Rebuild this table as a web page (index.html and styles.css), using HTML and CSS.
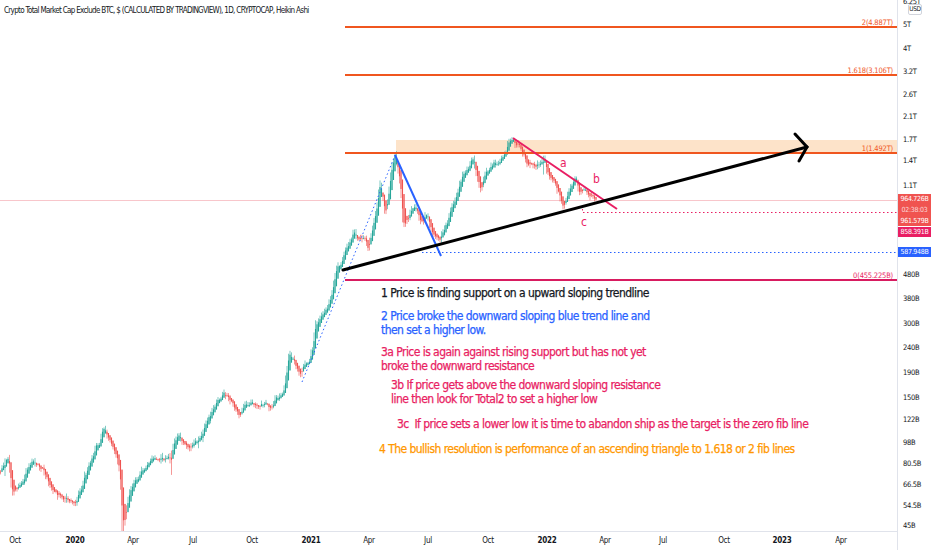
FILE: index.html
```html
<!DOCTYPE html>
<html lang="en">
<head>
<meta charset="utf-8">
<title>Crypto Total Market Cap Exclude BTC</title>
<link rel="stylesheet" href="styles.css">
</head>
<body>
<div class="app">
  <div class="chart">
    <svg class="plot" width="897" height="531" viewBox="0 0 897 531">
      <rect class="band" x="396" y="140" width="501" height="13"/>
      <line class="last-line" x1="0" y1="200.5" x2="897" y2="200.5"/>
      <g id="candles"></g>
      <line class="fib fib-hi" x1="345" y1="27" x2="897" y2="27"/>
      <line class="fib fib-hi" x1="345" y1="75" x2="897" y2="75"/>
      <line class="fib fib-hi" x1="345" y1="153" x2="897" y2="153"/>
      <line class="fib fib-zero" x1="345" y1="280" x2="897" y2="280"/>
      <text class="fib-label" x="893" y="25">2(4.887T)</text>
      <text class="fib-label" x="893" y="73">1.618(3.106T)</text>
      <text class="fib-label" x="893" y="151">1(1.492T)</text>
      <text class="fib-label zero" x="893" y="278">0(455.225B)</text>
      <line class="dot-blue" x1="302" y1="382" x2="396" y2="153"/>
      <line class="dot-blue" x1="422" y1="252.5" x2="897" y2="252.5"/>
      <line class="dot-red" x1="583" y1="212.5" x2="897" y2="212.5"/>
      <line class="dot-red" x1="582.5" y1="205" x2="582.5" y2="212"/>
      <line class="trend-blue" x1="395" y1="155" x2="441" y2="256"/>
      <line class="trend-red" x1="513" y1="138" x2="617" y2="209"/>
      <line class="trend-black" x1="343" y1="270" x2="807" y2="147"/>
      <polyline class="trend-black" points="795,134 807,147 799,161"/>
      <text class="wave" x="560" y="167">a</text>
      <text class="wave" x="593" y="183">b</text>
      <text class="wave" x="581" y="226">c</text>
    </svg>
    <div class="title">Crypto Total Market Cap Exclude BTC, $ (CALCULATED BY TRADINGVIEW), 1D, CRYPTOCAP, Heikin Ashi</div>
    <div class="note n1">1 Price is finding support on a upward sloping trendline</div>
    <div class="note n2">2 Price broke the downward sloping blue trend line and<br>then set a higher low.</div>
    <div class="note n3a">3a Price is again against rising support but has not yet<br>broke the downward resistance</div>
    <div class="note n3b">3b If price gets above the downward sloping resistance<br>line then look for Total2 to set a higher low</div>
    <div class="note n3c">3c&nbsp; If price sets a lower low it is time to abandon ship as the target is the zero fib line</div>
    <div class="note n4">4 The bullish resolution is performance of an ascending triangle to 1.618 or 2 fib lines</div>
  </div>
  <div class="price-axis">
    <span class="tick" style="top:1px">6.25T</span>
    <span class="unit">USD</span>
    <span class="tick" style="top:24px">5T</span>
    <span class="tick" style="top:48px">4T</span>
    <span class="tick" style="top:71px">3.2T</span>
    <span class="tick" style="top:94px">2.6T</span>
    <span class="tick" style="top:116px">2.1T</span>
    <span class="tick" style="top:139px">1.7T</span>
    <span class="tick" style="top:160px">1.4T</span>
    <span class="tick" style="top:185px">1.1T</span>
    <span class="tick" style="top:274px">480B</span>
    <span class="tick" style="top:298px">380B</span>
    <span class="tick" style="top:323px">300B</span>
    <span class="tick" style="top:347px">240B</span>
    <span class="tick" style="top:372px">190B</span>
    <span class="tick" style="top:397px">150B</span>
    <span class="tick" style="top:419px">122B</span>
    <span class="tick" style="top:442px">98B</span>
    <span class="tick" style="top:463px">80.5B</span>
    <span class="tick" style="top:484px">66.5B</span>
    <span class="tick" style="top:505px">54.5B</span>
    <span class="tick" style="top:525px">45B</span>
    <div class="tag tag-last" style="top:194px">
      <span>964.726B</span>
      <span class="timer">02:38:03</span>
      <span>961.579B</span>
    </div>
    <div class="tag tag-pink" style="top:227px"><span>858.391B</span></div>
    <div class="tag tag-blue" style="top:247px"><span>587.948B</span></div>
  </div>
  <div class="time-axis">
    <span class="date" style="left:15px">Oct</span>
    <span class="date year" style="left:75px">2020</span>
    <span class="date" style="left:133px">Apr</span>
    <span class="date" style="left:193px">Jul</span>
    <span class="date" style="left:252px">Oct</span>
    <span class="date year" style="left:311px">2021</span>
    <span class="date" style="left:369px">Apr</span>
    <span class="date" style="left:428px">Jul</span>
    <span class="date" style="left:488px">Oct</span>
    <span class="date year" style="left:547px">2022</span>
    <span class="date" style="left:605px">Apr</span>
    <span class="date" style="left:663px">Jul</span>
    <span class="date" style="left:724px">Oct</span>
    <span class="date year" style="left:782px">2023</span>
    <span class="date" style="left:841px">Apr</span>
  </div>
  <div class="corner"></div>
</div>
<script src="script.js"></script>
</body>
</html>
```

FILE: styles.css
```css
* { box-sizing: border-box; margin: 0; padding: 0; }
html, body { background: #ffffff; }
body {
  margin: 0;
  width: 932px;
  height: 550px;
  overflow: hidden;
  font-family: "DejaVu Sans Condensed", "Liberation Sans Narrow", "Liberation Sans", sans-serif;
  color: #131722;
}
.app {
  display: grid;
  grid-template-columns: 897px 35px;
  grid-template-rows: 531px 19px;
  width: 932px;
  height: 550px;
}
.chart { position: relative; overflow: hidden; }
.plot { display: block; }

.band { fill: #fde3c9; }
.last-line { stroke: #f8c6cb; stroke-width: 1; }
.fib { stroke-width: 2; }
.fib-hi { stroke: #f0561f; }
.fib-zero { stroke: #d81b60; }
.fib-label {
  font-size: 7.5px;
  letter-spacing: -0.2px;
  fill: #f0561f;
  text-anchor: end;
}
.fib-label.zero { fill: #e91e63; }
.dot-blue { stroke: #2962ff; stroke-width: 1; stroke-dasharray: 1.5 2.5; }
.dot-red { stroke: #e91e63; stroke-width: 1; stroke-dasharray: 1.5 2.5; }
.trend-blue { stroke: #2962ff; stroke-width: 2; }
.trend-red { stroke: #e91e63; stroke-width: 2; }
.trend-black { stroke: #000000; stroke-width: 3; fill: none; stroke-linecap: round; }
.wave { font-size: 12px; fill: #e91e63; }

.title {
  position: absolute;
  left: 4px;
  top: 5px;
  font-size: 8px;
  letter-spacing: -0.68px;
  line-height: 11px;
  white-space: nowrap;
  color: #131722;
}
.note {
  position: absolute;
  font-size: 12px;
  letter-spacing: -0.55px;
  line-height: 14px;
  white-space: nowrap;
  -webkit-text-stroke: 0.25px currentColor;
}
.n1 { left: 381px; top: 286px; color: #131722; }
.n2 { left: 381px; top: 309px; color: #2962ff; }
.n3a { left: 381px; top: 345px; color: #e91e63; }
.n3b { left: 391px; top: 378px; color: #e91e63; }
.n3c { left: 397px; top: 417px; color: #e91e63; }
.n4 { left: 379px; top: 442px; color: #ff9800; }

.price-axis {
  position: relative;
  border-left: 1px solid #e0e3eb;
  overflow: hidden;
  font-size: 7.5px;
  letter-spacing: -0.3px;
  color: #131722;
}
.tick {
  position: absolute;
  left: 5px;
  transform: translateY(-50%);
  line-height: 9px;
  white-space: nowrap;
}
.unit {
  position: absolute;
  left: 10px;
  top: 4px;
  width: 14px;
  height: 11px;
  border: 1px solid #d1d4dc;
  border-radius: 2px;
  font-size: 6.5px;
  line-height: 9px;
  text-align: center;
}
.tag {
  position: absolute;
  left: 0;
  width: 33px;
  display: flex;
  flex-direction: column;
  align-items: center;
  color: #ffffff;
  font-size: 7px;
  letter-spacing: -0.3px;
  line-height: 10px;
}
.tag-last { background: #f05350; height: 32px; justify-content: space-around; }
.tag-last .timer { color: rgba(255,255,255,0.75); }
.tag-pink { background: #e91e63; height: 10px; }
.tag-blue { background: #2962ff; height: 10px; }

.time-axis {
  position: relative;
  border-top: 1px solid #e0e3eb;
  font-size: 8px;
  letter-spacing: -0.3px;
}
.date {
  position: absolute;
  top: 50%;
  transform: translate(-50%, -50%);
  line-height: 10px;
  white-space: nowrap;
}
.date.year { font-weight: bold; }
.corner { border-left: 1px solid #e0e3eb; }
```

FILE: script.js
```js
(function () {
  var pts = [[0,473],[8,460],[12,490],[20,485],[33,463],[45,473],[52,490],[65,498],[75,505],[85,477],[103,427],[110,443],[116,453],[120,475],[122,515],[124,520],[127,505],[135,480],[150,460],[165,457],[170,460],[175,437],[185,443],[190,450],[200,437],[210,417],[222,393],[232,400],[237,413],[245,407],[255,408],[265,400],[272,407],[280,393],[285,385],[288,355],[295,365],[300,372],[305,362],[310,355],[315,330],[320,315],[325,310],[330,300],[335,275],[340,262],[345,250],[355,233],[365,240],[368,247],[375,217],[380,187],[385,213],[390,177],[395,157],[400,183],[403,225],[410,213],[415,207],[420,227],[425,217],[430,227],[435,240],[440,240],[445,227],[450,213],[455,197],[460,180],[465,173],[470,163],[473,157],[477,173],[480,187],[485,173],[490,167],[495,163],[500,160],[505,150],[510,143],[513,139],[518,147],[522,153],[528,160],[532,157],[535,167],[540,163],[543,157],[548,173],[553,180],[558,190],[562,207],[567,197],[572,183],[575,180],[580,193],[585,192],[588,197],[593,198],[596,200]];
  function base(x) {
    for (var i = 1; i < pts.length; i++) {
      if (x <= pts[i][0]) {
        var a = pts[i - 1], b = pts[i];
        return a[1] + (b[1] - a[1]) * (x - a[0]) / (b[0] - a[0]);
      }
    }
    return pts[pts.length - 1][1];
  }
  var s = 987654;
  function rnd() {
    s |= 0; s = s + 0x6D2B79F5 | 0;
    var t = Math.imul(s ^ s >>> 15, 1 | s);
    t = t + Math.imul(t ^ t >>> 7, 61 | t) ^ t;
    return ((t ^ t >>> 14) >>> 0) / 4294967296;
  }
  function gauss() { return (rnd() + rnd() + rnd() - 1.5) * 1.6; }
  var g = document.getElementById('candles');
  var out = '';
  var prevC = base(0), haO = null, haC = null, e = 0;
  for (var x = 0.5; x <= 596; x += 1.5) {
    e = 0.55 * e + gauss() * 2.4;
    var o = prevC;
    var c = base(x) + e;
    var h = Math.min(o, c) - rnd() * 3.5;
    var l = Math.max(o, c) + rnd() * 3.5;
    if (rnd() < 0.05) l += rnd() * 16;
    if (x > 121 && x < 123.5) l = 531;
    var nO = haO === null ? (o + c) / 2 : (haO + haC) / 2;
    var nC = (o + h + l + c) / 4;
    haO = nO; haC = nC;
    var top = Math.min(h, haO, haC), bot = Math.max(l, haO, haC);
    var col = haC <= haO ? '#26a69a' : '#ef5350';
    var bt = Math.min(haO, haC), bh = Math.max(Math.abs(haO - haC), 0.7);
    out += '<line x1="' + x.toFixed(2) + '" y1="' + top.toFixed(2) + '" x2="' + x.toFixed(2) + '" y2="' + bot.toFixed(2) + '" stroke="' + col + '" stroke-width="0.6"/>' +
           '<rect x="' + (x - 0.55).toFixed(2) + '" y="' + bt.toFixed(2) + '" width="1.1" height="' + bh.toFixed(2) + '" fill="' + col + '"/>';
    prevC = c;
  }
  g.innerHTML = out;
})();
```
